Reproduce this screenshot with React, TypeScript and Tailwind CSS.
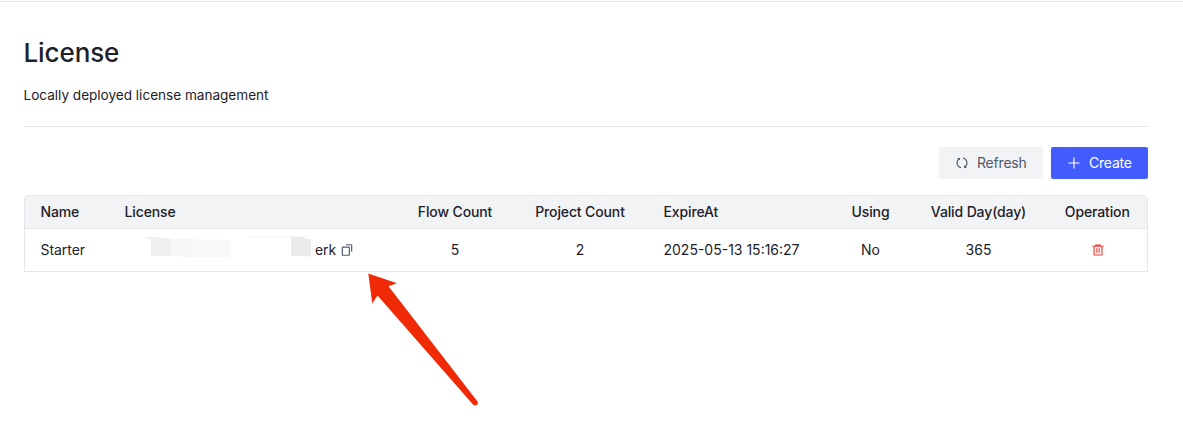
import type { ReactNode } from "react";

function Icon({ children, className = "" }: { children: ReactNode; className?: string }) {
  return (
    <svg viewBox="0 0 48 48" fill="none" stroke="currentColor" strokeWidth="4" className={`size-3.5 shrink-0 ${className}`}>
      {children}
    </svg>
  );
}

const columns = "grid grid-cols-[83.5px_289px_115px_135px_184px_78px_138px_1fr] items-center";

export default function App() {
  return (
    <div className="h-[433px] overflow-hidden bg-white pt-px font-['Inter',sans-serif] text-sm text-[#1d2129]">
      <main className="relative h-full border-t border-[#e5e6eb] pl-6 pr-[35px]">
        <h1 className="-ml-[0.5px] pt-[32px] text-[26px] leading-[38px] font-medium tracking-[-0.1px]">License</h1>
        <p className="-ml-[0.5px] mt-[12px] text-[13.6px] leading-[22px] tracking-[-0.02px]">Locally deployed license management</p>
        <div className="mt-5 border-t border-[#e5e6eb]" />

        <div className="mt-5 flex justify-end gap-2">
          <button className="flex h-8 w-[104px] items-center gap-2 rounded-[2px] bg-[#f2f3f5] pl-4 tracking-[-0.2px] text-[#4e5969]">
            <Icon>
              <path d="M11.98 11.703c-6.64 6.64-6.64 17.403 0 24.042a16.922 16.922 0 0 0 8.942 4.7M34.603 37.156l1.414-1.415c6.64-6.639 6.64-17.402 0-24.041A16.922 16.922 0 0 0 27.075 7M14.81 11.982l-1.414-1.414-1.414-1.414h2.829v2.828ZM33.192 36.02l1.414 1.414 1.414 1.415h-2.828V36.02Z" />
            </Icon>
            Refresh
          </button>
          <button className="flex h-8 w-[97px] items-center gap-2 rounded-[2px] bg-[#425cff] pl-4 tracking-[-0.2px] text-white">
            <Icon>
              <path d="M5 24h38M24 5v38" />
            </Icon>
            Create
          </button>
        </div>

        <section className="mt-4 overflow-hidden rounded-t border border-[#e5e6eb]">
          <div className={`${columns} h-[33px] border-b border-[#e5e6eb] bg-[#f2f3f5] font-medium tracking-[-0.13px]`}>
            <span className="pl-[15.5px]">Name</span>
            <span className="pl-4">License</span>
            <span className="text-center">Flow Count</span>
            <span className="text-center">Project Count</span>
            <span className="pl-4">ExpireAt</span>
            <span className="text-center">Using</span>
            <span className="text-center">Valid Day(day)</span>
            <span className="text-center">Operation</span>
          </div>
          <div className={`${columns} h-[42px]`}>
            <span className="pl-[15.5px] tracking-[-0.05px]">Starter</span>
            <div className="flex items-center pl-4">
              <svg viewBox="0 0 190 22" className="-mt-[7px] h-[22px] w-[190px] shrink-0">
                <path d="M18 1q10-1 28 2v1l-20-1z" fill="#eeeef0" />
                <path d="M26 1l20 2v17H26z" fill="#f0f0f2" />
                <path d="M46 3h20v18l-20-1z" fill="#f7f7f9" />
                <path d="M66 3l40 1v17H66z" fill="#f9f9fb" />
                <path d="M123 0.5h43v1h-43z" fill="#f3f3f3" />
                <path d="M166 0.5h11l5 3 4-1v18l-20-1z" fill="#ebebeb" />
              </svg>
              <span className="ml-[0.5px] tracking-[-0.1px]">erk</span>
              <Icon className="ml-1 text-[#4e5969]">
                <path d="M20 6h18a2 2 0 0 1 2 2v22M8 16v24c0 1.105.891 2 1.996 2h20.007A1.99 1.99 0 0 0 32 40.008V15.997A1.997 1.997 0 0 0 30 14H10a2 2 0 0 0-2 2Z" />
              </Icon>
            </div>
            <span className="text-center">5</span>
            <span className="text-center">2</span>
            <span className="pl-4">2025-05-13 15:16:27</span>
            <span className="text-center">No</span>
            <span className="text-center">365</span>
            <span className="flex justify-center pl-px text-[#f53f3f]">
              <Icon>
                <path d="M5 11h5.5m0 0v29a1 1 0 0 0 1 1h25a1 1 0 0 0 1-1V11m-27 0H16m21.5 0H43m-5.5 0H32m-16 0V7h16v4m-16 0h16M20 18v15m8-15v15" />
              </Icon>
            </span>
          </div>
        </section>

        <svg viewBox="0 0 112 134" className="absolute left-[367px] top-[270px] h-[134px] w-[112px]">
          <path d="M1.3 1.5L30 11.3L21.5 14.2L110.5 129.5Q111.5 132 109.5 133Q107.5 134 106 132.5L10.5 23.5L5.3 31.5Z" fill="#f02906" />
        </svg>
      </main>
    </div>
  );
}
